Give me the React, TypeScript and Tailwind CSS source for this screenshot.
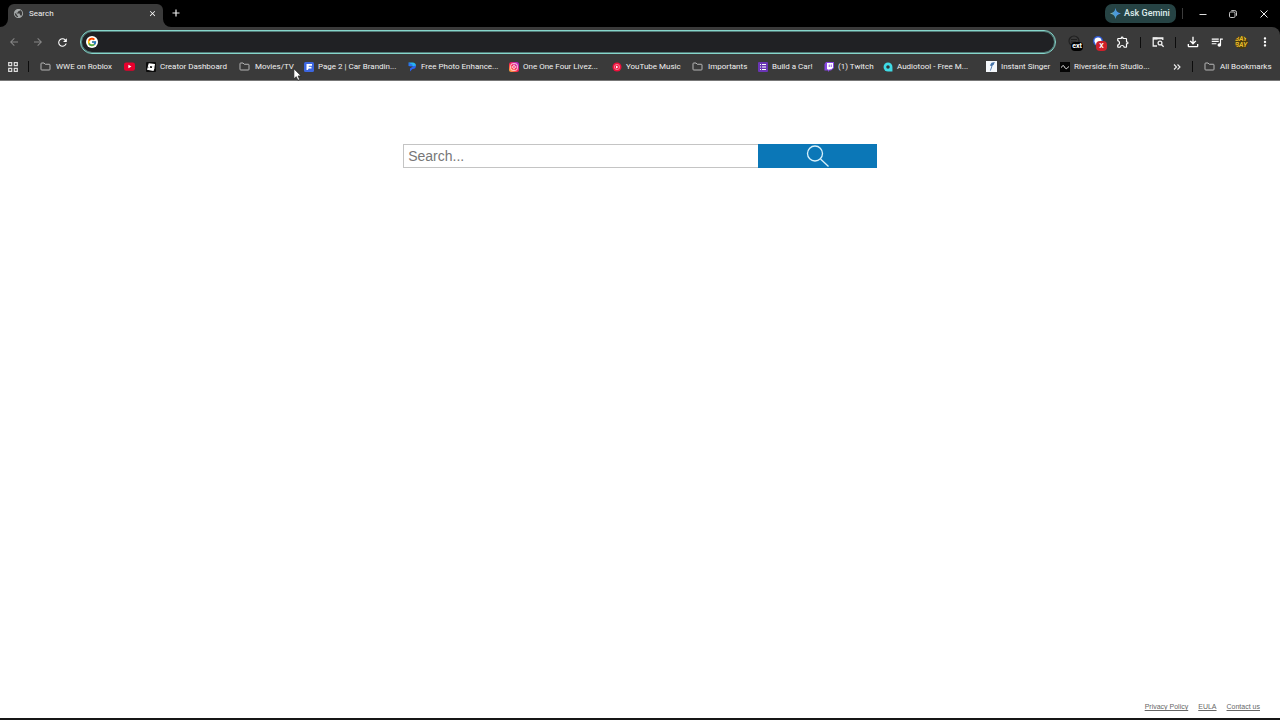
import type { ReactNode } from "react";
import { FcGoogle } from "react-icons/fc";
import {
  MdArrowBack,
  MdArrowForward,
  MdClose,
  MdMoreVert,
  MdOutlineExtension,
  MdOutlineFileDownload,
  MdPublic,
  MdQueueMusic,
  MdRefresh,
} from "react-icons/md";

type Bookmark = {
  label: string;
  icon: ReactNode;
  width: string;
  hideLabel?: boolean;
};

function FolderIcon() {
  return (
    <svg viewBox="0 0 22 18" className="mr-px h-[9px] w-[11px] shrink-0" fill="none" stroke="#c4c4c4" strokeWidth="1.8">
      <path d="M2 3.5a1.5 1.5 0 0 1 1.5-1.5H8l2.5 2.5h8A1.5 1.5 0 0 1 20 6v8.500a1.500 1.500 0 0 1-1.500 1.500h-15A1.500 1.500 0 0 1 2 14.500z" />
    </svg>
  );
}

function YoutubeIcon() {
  return (
    <svg viewBox="0 0 20 20" className="size-[11px] shrink-0">
      <rect x="0" y="2.500" width="20" height="15" rx="4" fill="#e8002d" />
      <path d="M8 7l5.500 3L8 13z" fill="#fff" />
    </svg>
  );
}

function RobloxIcon() {
  return (
    <svg viewBox="0 0 20 20" className="size-2.5 shrink-0">
      <rect width="20" height="20" rx="2" fill="#0b0b0b" />
      <path d="M5.500 2.500L18 4l-1 6-3-.500L17.500 11 15 18 2 15.500l1.500-5 3 .500L3.500 9z" fill="#fff" />
      <path d="M8.500 8l4 .800-.800 3.400-4-.800z" fill="#0b0b0b" />
    </svg>
  );
}

function PageIcon() {
  return (
    <svg viewBox="0 0 20 20" className="size-2.5 shrink-0">
      <rect width="20" height="20" rx="3" fill="#3c66e0" />
      <path d="M5 4h11v3.500H9.500v2H15V13H9.500l-2 3H5z" fill="#fff" />
    </svg>
  );
}

function PhotoIcon() {
  return (
    <svg viewBox="0 0 20 20" className="size-2.5 shrink-0">
      <path d="M3 1h8a7 7 0 0 1 7 7l-7 1z" fill="#27b6f0" />
      <path d="M18 7a7 7 0 0 1-7 7l-5 5v-6l7-5z" fill="#2d62ef" />
      <path d="M3 1v7l6 1 3-3z" fill="#2b74f2" />
    </svg>
  );
}

function InstagramIcon() {
  return (
    <svg viewBox="0 0 20 20" className="size-2.5 shrink-0">
      <defs>
        <linearGradient id="ig" x1="0" y1="1" x2="1" y2="0">
          <stop offset="0" stopColor="#ffc83d" />
          <stop offset="0.45" stopColor="#fd1d4d" />
          <stop offset="1" stopColor="#a02be0" />
        </linearGradient>
      </defs>
      <rect width="20" height="20" rx="5" fill="url(#ig)" />
      <rect x="3.500" y="3.500" width="13" height="13" rx="3.500" fill="none" stroke="#fff" strokeWidth="1.700" />
      <circle cx="10" cy="10" r="2.800" fill="none" stroke="#fff" strokeWidth="1.700" />
    </svg>
  );
}

function YoutubeMusicIcon() {
  return (
    <svg viewBox="0 0 20 20" className="size-2.5 shrink-0">
      <circle cx="10" cy="10" r="9" fill="#f0103c" />
      <circle cx="10" cy="10" r="5.200" fill="none" stroke="#ffd6de" strokeWidth="1" />
      <path d="M8 7l5 3-5 3z" fill="#fff" />
    </svg>
  );
}

function FormIcon() {
  return (
    <svg viewBox="0 0 10 10" className="size-2.5 shrink-0">
      <rect width="10" height="10" rx="1" fill="#6a35b5" />
      <path d="M2 2h1v1H2zM2 4.500h1v1H2zM2 7h1v1H2zM4 2h4v1H4zM4 4.500h4v1H4zM4 7h4v1H4z" fill="#fff" />
    </svg>
  );
}

function TwitchIcon() {
  return (
    <svg viewBox="0 0 20 20" className="size-2.5 shrink-0">
      <path d="M4 0h16v12l-6 5h-3l-3 3v-3H1V4z" fill="#8646e0" />
      <path d="M6 2h12v9.500L14.500 14.500h-3l-2.500 2v-2H6z" fill="#fff" />
      <path d="M10.500 5v5M14.500 5v5" stroke="#8646e0" strokeWidth="1.800" />
    </svg>
  );
}

function AudiotoolIcon() {
  return (
    <svg viewBox="1 1 18 18" className="size-2.5 shrink-0">
      <path d="M10 2a8 8 0 1 0 0 16h8v-8a8 8 0 0 0-8-8z" fill="#3fdbe6" />
      <circle cx="10" cy="10" r="3.200" fill="#303638" />
    </svg>
  );
}

function SingerIcon() {
  return (
    <svg viewBox="0 0 20 20" className="size-[11px] shrink-0">
      <rect width="20" height="20" fill="#f4f7fb" />
      <path d="M10 3l6-1-2 5-2 1-3 9-2 1 3-9-3-1z" fill="#4673a8" />
    </svg>
  );
}

function RiversideIcon() {
  return (
    <svg viewBox="0 0 20 20" className="size-2.5 shrink-0">
      <rect width="20" height="20" fill="#050505" />
      <path d="M3 11c2-5 4-5 6-1s5 5 8-1" fill="none" stroke="#f4f4f4" strokeWidth="2" />
    </svg>
  );
}

const bookmarks: Bookmark[] = [
  { label: "WWE on Roblox", icon: <FolderIcon />, width: "w-[84px]" },
  { label: "YouTube", icon: <YoutubeIcon />, width: "w-[22px]", hideLabel: true },
  { label: "Creator Dashboard", icon: <RobloxIcon />, width: "w-[93px]" },
  { label: "Movies/TV", icon: <FolderIcon />, width: "w-[65px]" },
  { label: "Page 2 | Car Brandin...", icon: <PageIcon />, width: "w-[103px]" },
  { label: "Free Photo Enhance...", icon: <PhotoIcon />, width: "w-[102px]" },
  { label: "One One Four Livez...", icon: <InstagramIcon />, width: "w-[103px]" },
  { label: "YouTube Music", icon: <YoutubeMusicIcon />, width: "w-[80px]" },
  { label: "Importants", icon: <FolderIcon />, width: "w-[66px]" },
  { label: "Build a Car!", icon: <FormIcon />, width: "w-[66px]" },
  { label: "(1) Twitch", icon: <TwitchIcon />, width: "w-[59px]" },
  { label: "Audiotool - Free M...", icon: <AudiotoolIcon />, width: "w-[103px]" },
  { label: "Instant Singer", icon: <SingerIcon />, width: "w-[74px]" },
  { label: "Riverside.fm Studio...", icon: <RiversideIcon />, width: "w-[90px]" },
];

function Slot({ label, children }: { label: string; children: ReactNode }) {
  return (
    <button type="button" aria-label={label} className="flex h-6 w-6 shrink-0 items-center justify-center">
      {children}
    </button>
  );
}

function Divider() {
  return (
    <div className="flex w-[11px] shrink-0 justify-center">
      <div className="h-[11px] w-px bg-[#0c0c0c]" />
    </div>
  );
}

function TitleBar() {
  return (
    <div className="flex h-[27px] items-end bg-black pl-2">
      <div className="relative flex h-[23px] w-[155px] items-center rounded-t-md bg-[#3a3a3a] pr-1.5 pb-1 pl-[5px]">
        {/* curved feet on both sides of the tab */}
        <svg viewBox="0 0 8 8" className="absolute bottom-0 -left-2 size-2">
          <path d="M8 0v8H0a8 8 0 0 0 8-8z" fill="#3a3a3a" />
        </svg>
        <svg viewBox="0 0 8 8" className="absolute -right-2 bottom-0 size-2">
          <path d="M0 0v8h8a8 8 0 0 1-8-8z" fill="#3a3a3a" />
        </svg>
        <MdPublic className="size-[11px] text-[#a4a8a8]" />
        <span className="ml-[5px] flex-1 text-[8px] text-[#f0f0f0]">Search</span>
        <button type="button" aria-label="Close tab">
          <MdClose className="size-[9px] text-white" />
        </button>
      </div>
      <button type="button" aria-label="New tab" className="ml-1.5 flex h-7 w-[14px] items-center justify-center">
        <svg viewBox="0 0 8 8" className="size-2" stroke="#eee" strokeWidth="1.200">
          <path d="M4 0.500v7M0.500 4h7" />
        </svg>
      </button>
      <div className="ml-auto flex h-[27px] items-center">
        <button
          type="button"
          className="flex h-[19px] w-[71px] items-center rounded-[7px] bg-[#264344] pl-[5px] text-[9px] font-medium text-[#dcebea]"
        >
          <svg viewBox="0 0 20 20" className="mr-[3px] size-[11px] shrink-0">
            <defs>
              <linearGradient id="gem" x1="0" y1="0.700" x2="1" y2="0.300">
                <stop offset="0" stopColor="#c9b85c" />
                <stop offset="0.350" stopColor="#4b9ed0" />
                <stop offset="1" stopColor="#4d8ff5" />
              </linearGradient>
            </defs>
            <path d="M10 0c1 6 4 9 10 10-6 1-9 4-10 10-1-6-4-9-10-10 6-1 9-4 10-10z" fill="url(#gem)" />
          </svg>
          <span className="whitespace-nowrap">Ask Gemini</span>
        </button>
        <div className="mr-1 ml-1.5 h-[11px] w-px bg-[#3c3c3c]" />
        <button type="button" aria-label="Minimize" className="flex h-6 w-[31px] items-center justify-center">
          <svg viewBox="0 0 8 8" className="size-2" stroke="#ddd" strokeWidth="1">
            <path d="M0.500 4.500h7" />
          </svg>
        </button>
        <button type="button" aria-label="Restore" className="flex h-6 w-[30px] items-center justify-center">
          <svg viewBox="0 0 8 8" className="size-2" fill="none" stroke="#ddd" strokeWidth="0.900">
            <rect x="0.500" y="2" width="5.500" height="5.500" rx="1.200" />
            <path d="M2.300 0.600h3.500a1.700 1.700 0 0 1 1.700 1.700v3.500" />
          </svg>
        </button>
        <button type="button" aria-label="Close" className="flex h-6 w-8 items-center justify-center">
          <svg viewBox="0 0 8 8" className="size-2" stroke="#eee" strokeWidth="1">
            <path d="M0.500 0.500l7 7M7.500 0.500l-7 7" />
          </svg>
        </button>
      </div>
    </div>
  );
}

function Toolbar() {
  return (
    <div className="flex h-[30px] items-center pr-[3px] pl-0.5">
      <Slot label="Back">
        <MdArrowBack className="size-3 text-[#858585]" />
      </Slot>
      <Slot label="Forward">
        <MdArrowForward className="size-3 text-[#858585]" />
      </Slot>
      <Slot label="Reload">
        <MdRefresh className="size-[13px] text-white" />
      </Slot>
      <div className="mr-[7px] ml-1.5 flex h-6 flex-1 items-center rounded-full border border-[#86d6cb] bg-[#202124] pl-[5px] ring-1 ring-[#86d6cb]/50 ring-inset">
        <div className="flex size-3 items-center justify-center rounded-full bg-white">
          <FcGoogle className="size-2.5" />
        </div>
        <input
          type="text"
          aria-label="Address and search bar"
          className="ml-2 h-5 flex-1 bg-transparent text-[9px] text-white outline-none"
        />
      </div>
      <Slot label="Ext extension">
        <span className="relative size-[14px]">
          <svg viewBox="0 0 14 14" className="size-[14px]" fill="none" stroke="#202020" strokeWidth="1.200">
            <circle cx="6" cy="6" r="5" />
            <path d="M3 4.500h6M3 7h5" />
          </svg>
          <span className="absolute top-[7px] left-[3px] flex h-[9px] w-3 items-center justify-center rounded-sm bg-black text-[7px] font-bold text-white">
            ext
          </span>
        </span>
      </Slot>
      <Slot label="Blocked extension">
        <span className="relative size-[14px]">
          <svg viewBox="0 0 14 14" className="size-[14px]">
            <circle cx="6" cy="6" r="5" fill="#315bd4" />
            <path d="M2.500 6.500a3.500 3.500 0 0 1 7-1L8 10H4z" fill="#fff" />
          </svg>
          <span className="absolute top-1.5 left-1 flex h-2.5 w-[11px] items-center justify-center rounded-sm bg-[#cf202b] text-[7px] font-bold text-white">
            X
          </span>
        </span>
      </Slot>
      <Slot label="Extensions">
        <MdOutlineExtension className="size-[14px] text-white" />
      </Slot>
      <Divider />
      <Slot label="Reading list">
        <svg viewBox="0 0 12 12" className="size-3" fill="none" stroke="#eee" strokeWidth="1.300">
          <path d="M5 10H1.200V2h9.600v2M1 2.600h10" />
          <path d="M1 2.500h4.500" strokeWidth="2" />
          <circle cx="8" cy="7" r="1.900" />
          <path d="M9.400 8.500l2.200 2.300" />
        </svg>
      </Slot>
      <Divider />
      <Slot label="Downloads">
        <MdOutlineFileDownload className="size-4 text-white" />
      </Slot>
      <Slot label="Media controls">
        <MdQueueMusic className="size-[14px] text-white" />
      </Slot>
      <Slot label="Profile">
        <span className="flex size-[13px] flex-col items-center justify-center overflow-hidden rounded-full bg-[#4a3c0c] text-[7px] leading-[6px] font-bold text-[#e6bd2e] italic">
          <span>BAY</span>
          <span>BAY</span>
        </span>
      </Slot>
      <Slot label="Menu">
        <MdMoreVert className="size-[14px] text-white" />
      </Slot>
    </div>
  );
}

function BookmarksBar() {
  return (
    <nav aria-label="Bookmarks" className="flex h-[23px] items-center pb-1 text-[8px] leading-[10px] whitespace-nowrap text-[#f0f0f0]">
      <button type="button" aria-label="Apps" className="ml-2 shrink-0">
        <svg viewBox="0 0 10 10" className="size-2.5" fill="none" stroke="#ddd" strokeWidth="1.200">
          <path d="M0.700 0.700h3v3h-3zM6.300 0.700h3v3h-3zM0.700 6.300h3v3h-3zM6.300 6.300h3v3h-3z" />
        </svg>
      </button>
      <div className="mr-[11px] ml-2.5 h-[11px] w-px shrink-0 bg-[#0c0c0c]" />
      {bookmarks.map((b) => (
        <a
          key={b.label}
          href="#"
          aria-label={b.label}
          className={`flex shrink-0 items-center gap-1 ${b.width}`}
        >
          {b.icon}
          {!b.hideLabel && <span>{b.label}</span>}
        </a>
      ))}
      <button type="button" aria-label="More bookmarks" className="ml-auto shrink-0">
        <svg viewBox="0 0 8 8" className="size-2" fill="none" stroke="#eee" strokeWidth="1.100">
          <path d="M1 1.500L3.500 4 1 6.500M4.500 1.500L7 4 4.500 6.500" />
        </svg>
      </button>
      <div className="mx-[11px] h-[11px] w-px shrink-0 bg-[#0c0c0c]" />
      <a href="#" className="mr-2 flex w-[68px] shrink-0 items-center gap-1">
        <FolderIcon />
        <span>All Bookmarks</span>
      </a>
    </nav>
  );
}

export default function App() {
  return (
    <div className="flex min-h-screen flex-col border-b-2 border-[#161616] bg-white font-[Roboto,'Open_Sans',sans-serif]">
      <header className="relative bg-black">
        <TitleBar />
        <div className="rounded-tr-lg border-b border-[#777] bg-[#3a3a3a]">
          <Toolbar />
          <BookmarksBar />
        </div>
        {/* mouse pointer */}
        <svg viewBox="0 0 12 18" className="absolute top-[68px] left-[293px] h-[13px] w-[9px]">
          <path d="M1 1v14l3.300-3 2.200 5 2.500-1-2.200-5H11z" fill="#fff" stroke="#222" strokeWidth="1" />
        </svg>
      </header>

      <main className="flex flex-1 flex-col font-['Liberation_Sans',Arial,sans-serif]">
        <form className="mx-auto mt-[63px] flex h-6 w-[37%]" onSubmit={(e) => e.preventDefault()}>
          <input
            type="text"
            aria-label="Search"
            placeholder="Search..."
            className="w-3/4 border border-r-0 border-[#c4c4c4] pl-1 text-[14px] text-[#333] outline-none placeholder:text-[#777]"
          />
          <button type="submit" aria-label="Search" className="flex w-1/4 justify-center bg-[#0b77b7]">
            <svg viewBox="0 0 24 24" className="size-6" fill="none" stroke="#d8f1fb" strokeWidth="1.300">
              <circle cx="9" cy="9.500" r="7.500" />
              <path d="M14.500 15l8 7.500" />
            </svg>
          </button>
        </form>

        <footer className="mt-auto flex justify-end gap-2.5 pr-5 pb-1.5 text-[7px] leading-[10px] text-[#666]">
          <a href="#" className="underline">Privacy Policy</a>
          <a href="#" className="underline">EULA</a>
          <a href="#" className="underline">Contact us</a>
        </footer>
      </main>
    </div>
  );
}
